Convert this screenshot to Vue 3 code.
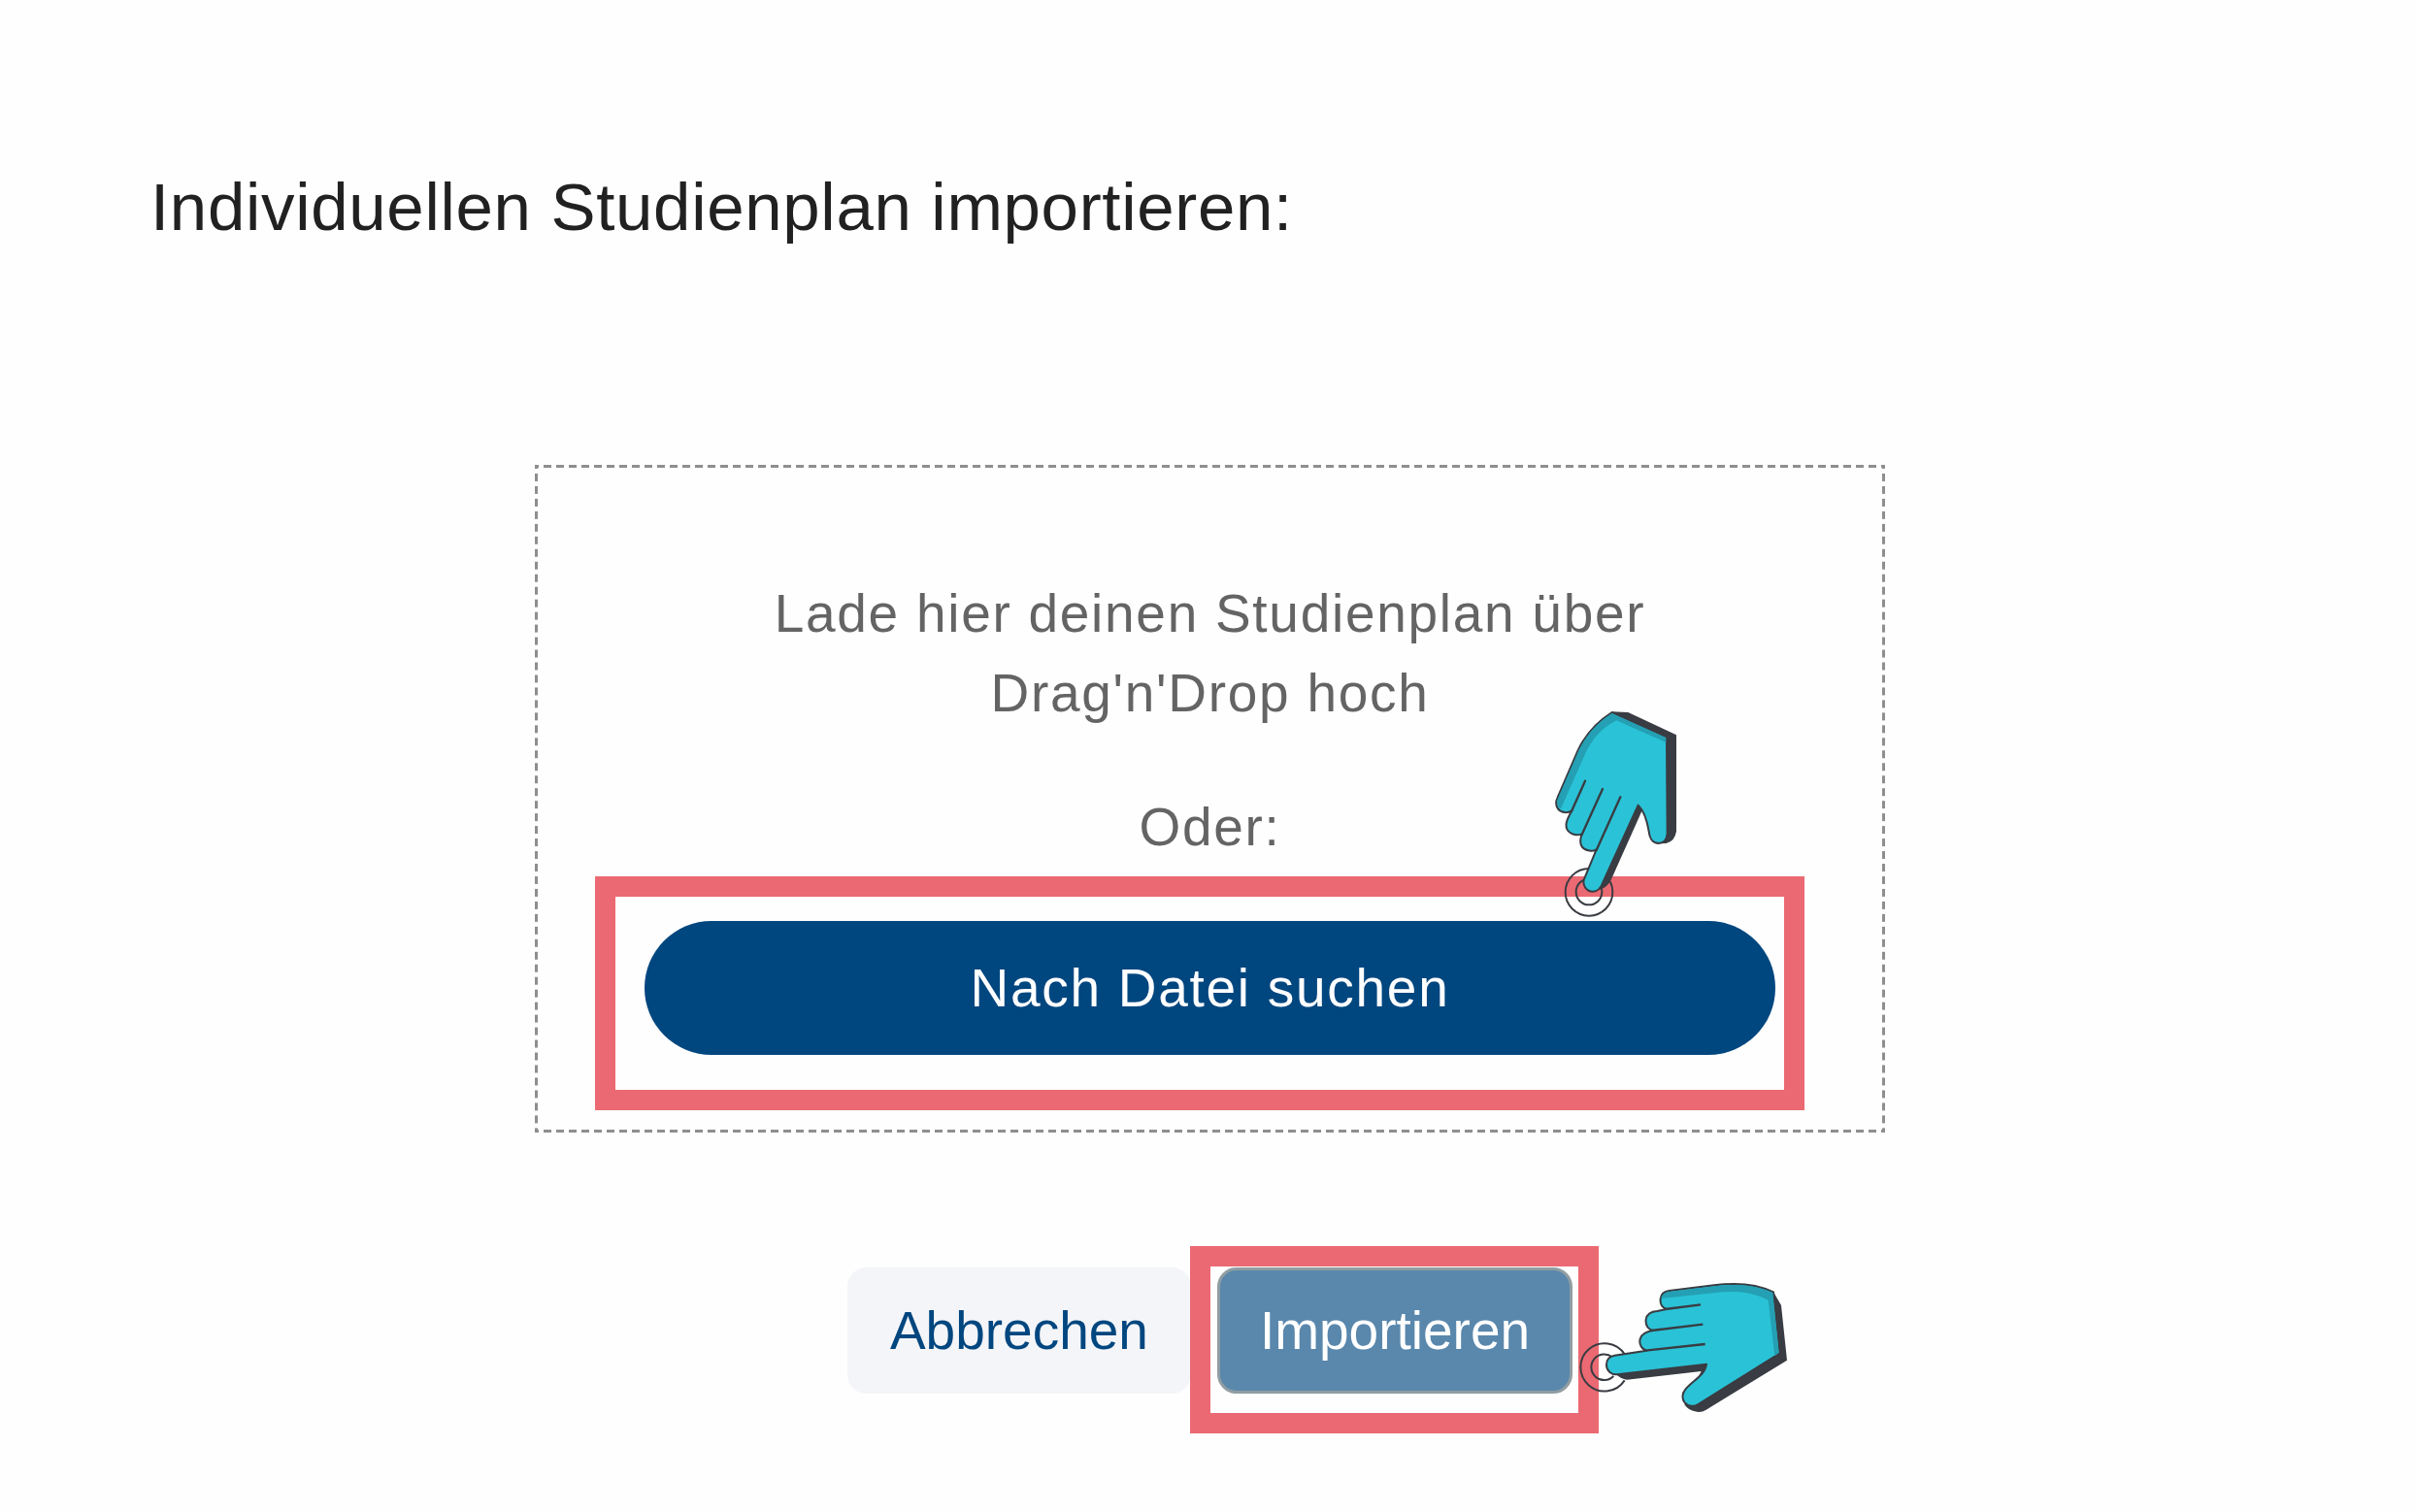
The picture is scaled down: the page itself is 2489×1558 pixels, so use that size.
<script setup>
function onFiles(event) {
  const input = event.target
  input.value = ''
}
</script>

<template>
  <main class="page">
    <h1 class="title">Individuellen Studienplan importieren:</h1>

    <section class="dropzone">
      <p class="hint">Lade hier deinen Studienplan über Drag'n'Drop hoch</p>
      <p class="hint">Oder:</p>
      <div class="target browse-target">
        <button type="button" class="browse" @click="$refs.file.click()">Nach Datei suchen</button>
        <input ref="file" type="file" hidden aria-label="Studienplan" @change="onFiles" />
        <span class="frame browse-frame"></span>
        <svg class="hand browse-hand" viewBox="0 0 540 750" aria-hidden="true">
          <g fill="none" stroke="#393c42" stroke-width="6">
            <circle cx="171" cy="628" r="73" />
            <circle cx="171" cy="627" r="40" />
          </g>
          <path fill="#393c42" d="M242 70L292 72L441 142V440Q436 470 410 477L386 478L335 376L240 588Q228 614 204 620L180 620L320 360L400 160Z" />
          <path fill="#2ac2d6" stroke="#393c42" stroke-width="6" stroke-linejoin="round" d="M242 72L411 149L413 446C411 470 400 477 386 477C366 476 359 463 356 440C351 410 344 380 323 359L213 600C206 618 197 626 183 626C163 626 151 607 155 590L194 496C183 503 160 502 149 487C141 475 144 462 149 448C135 455 111 449 103 433C97 419 101 407 118 376C105 384 86 384 75 370C67 359 68 348 74 335L138 187C162 138 196 101 242 72Z" />
          <path fill="#249fb3" d="M242 75L409 150V165L256 97C215 117 185 150 164 190L84 370C72 365 69 348 76 336L140 188C164 140 198 103 242 75Z" />
          <path fill="none" stroke="#393c42" stroke-width="7" stroke-linecap="round" d="M159 284L117 378M213 309L149 450M268 334L194 498" />
        </svg>
      </div>
    </section>

    <div class="actions">
      <button type="button" class="action cancel">Abbrechen</button>
      <div class="target">
        <button type="button" class="action import">Importieren</button>
        <span class="frame import-frame"></span>
        <svg class="hand import-hand" viewBox="0 0 750 510" aria-hidden="true">
          <path fill="none" stroke="#393c42" stroke-width="6" d="M188 286A74 74 0 1 0 188 367M150 295A40 40 0 1 0 154 354" />
          <path fill="#393c42" d="M648 94L672 135L690 305L440 458Q424 468 405 463Q384 458 373 442L425 339L195 365Q177 363 162 349L440 315L610 300Z" />
          <path fill="#2ac2d6" stroke="#393c42" stroke-width="6" stroke-linejoin="round" d="M648 94L668 283L414 442C403 450 384 447 374 436C364 424 366 407 376 395C397 369 438 350 441 317L165 349C147 350 133 338 132 321C131 302 143 292 157 290L256 275C241 272 232 255 236 239C240 223 252 217 274 213C260 207 252 195 254 179C257 161 269 154 289 153L317 147C304 142 297 130 299 114C301 99 311 92 326 90L465 73C533 64 598 70 648 94Z" />
          <path fill="#249fb3" d="M646 96L665 281L652 292L632 119C582 94 535 89 470 96L301 114C303 101 314 94 328 92L466 76C533 67 596 73 646 96Z" />
          <path fill="none" stroke="#393c42" stroke-width="7" d="M314 147L423 133M272 213L430 194M253 275L437 255" />
        </svg>
      </div>
    </div>
  </main>
</template>

<style>
body {
  margin: 0;
  background: #fefefe;
}
</style>

<style scoped>
.page {
  padding: 173px 151px 80px 155px;
  font-family: "Liberation Sans", Arial, sans-serif;
  font-size: 55px;
}

.title {
  margin: 0;
  color: #212121;
  font-size: 69px;
  font-weight: 400;
  line-height: 82px;
  letter-spacing: 0.01em;
}

.dropzone {
  --dash: #8e8e8e 0 4px, transparent 4px 9px, #8e8e8e 9px 13px;
  box-sizing: border-box;
  max-width: 1391px;
  margin: 224px auto 0;
  padding: 112px 113px 80px;
  background:
    linear-gradient(90deg, var(--dash)) left top / 13px 3px round no-repeat,
    linear-gradient(90deg, var(--dash)) left bottom / 13px 3px round no-repeat,
    linear-gradient(var(--dash)) left top / 3px 13px no-repeat round,
    linear-gradient(var(--dash)) right top / 3px 13px no-repeat round;
}

.hint {
  margin: 0 0 56px;
  padding: 0 80px;
  color: #646464;
  line-height: 82px;
  letter-spacing: 0.03125em;
  text-align: center;
}

.target {
  position: relative;
}

.browse {
  display: block;
  width: 100%;
  height: 138px;
  padding: 0;
  border: 0;
  border-radius: 69px;
  background: #00467f;
  color: #fff;
  font: inherit;
  letter-spacing: 0.03125em;
}

.actions {
  display: flex;
  justify-content: center;
  gap: 27px;
  margin-top: 139px;
}

.action {
  display: block;
  height: 130px;
  padding: 0 41px;
  border: 3px solid #f4f5f8;
  border-radius: 20px;
  background: #f4f5f8;
  color: #00467f;
  font: inherit;
}

.import {
  border-color: #909da3;
  background: #5a87ac;
  color: #fff;
}

.frame {
  position: absolute;
  border: 21px solid #eb6972;
  pointer-events: none;
}

.browse-frame {
  inset: -46px -30px -57px -51px;
}

.import-frame {
  inset: -22px -27px -41px -28px;
}

.hand {
  position: absolute;
  pointer-events: none;
}

.browse-hand {
  top: -239px;
  right: 69px;
  width: 180px;
  height: 250px;
}

.import-hand {
  top: -6px;
  left: 357px;
  width: 250px;
  height: 170px;
}
</style>
